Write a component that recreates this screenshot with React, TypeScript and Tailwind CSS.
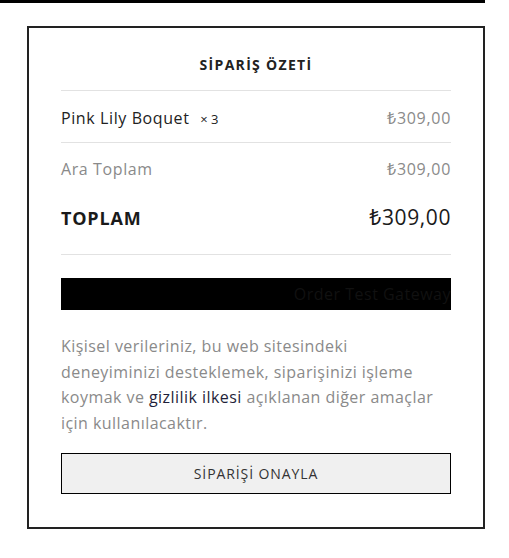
import React from "react";

export default function App() {
  const font = { fontFamily: '"Open Sans", "Noto Sans", sans-serif' };
  return (
    <div className="w-[509px] h-[558px] bg-white" style={font}>
      <div className="w-[485px] h-[3px] bg-black" />
      <div className="ml-[27px] mt-[23px] w-[458px] border-2 border-[#222] px-[32px] pb-[33px]">
        <div className="h-[62px] flex items-end justify-center pb-[15px]">
          <h2 className="text-[14px] font-bold tracking-[1.3px] text-[#222]">SİPARİŞ ÖZETİ</h2>
        </div>
        <div className="border-t border-[#e2e2e2]" />
        <div className="h-[51px] flex items-center justify-between pt-[2px]">
          <span className="text-[16px] tracking-[0.6px] text-[#222]">
            Pink Lily Boquet <span className="text-[13px] ml-[6px] tracking-normal">× 3</span>
          </span>
          <span className="text-[16px] tracking-[0.7px] text-[#8a8a8a]">₺309,00</span>
        </div>
        <div className="border-t border-[#e2e2e2]" />
        <div className="h-[52px] flex items-center justify-between">
          <span className="text-[16px] tracking-[0.6px] text-[#8a8a8a]">Ara Toplam</span>
          <span className="text-[16px] tracking-[0.7px] text-[#8a8a8a]">₺309,00</span>
        </div>
        <div className="h-[59px] flex items-start pt-[10px] justify-between">
          <span className="text-[18px] font-bold tracking-[0.8px] text-[#1a1a1a]">TOPLAM</span>
          <span className="text-[21px] tracking-[0.6px] text-[#1a1a1a] leading-[28px] -mt-[2px]">₺309,00</span>
        </div>
        <div className="border-t border-[#e2e2e2]" />
        <div className="mt-[23px] h-[32px] bg-black flex items-center justify-end">
          <span className="text-[16px] tracking-[0.5px] text-[#111]">Order Test Gateway</span>
        </div>
        <p className="mt-[24px] text-[16px] tracking-[0.45px] leading-[25.5px] text-[#8a8a8a]">
          Kişisel verileriniz, bu web sitesindeki
          <br />
          deneyiminizi desteklemek, siparişinizi işleme
          <br />
          koymak ve <a className="text-[#1f1f3a]">gizlilik ilkesi</a> açıklanan diğer amaçlar
          <br />
          için kullanılacaktır.
        </p>
        <button className="mt-[17px] w-full h-[41px] bg-[#f0f0f0] border border-black text-[14px] tracking-[0.9px] text-[#333]">
          SİPARİŞİ ONAYLA
        </button>
      </div>
    </div>
  );
}
